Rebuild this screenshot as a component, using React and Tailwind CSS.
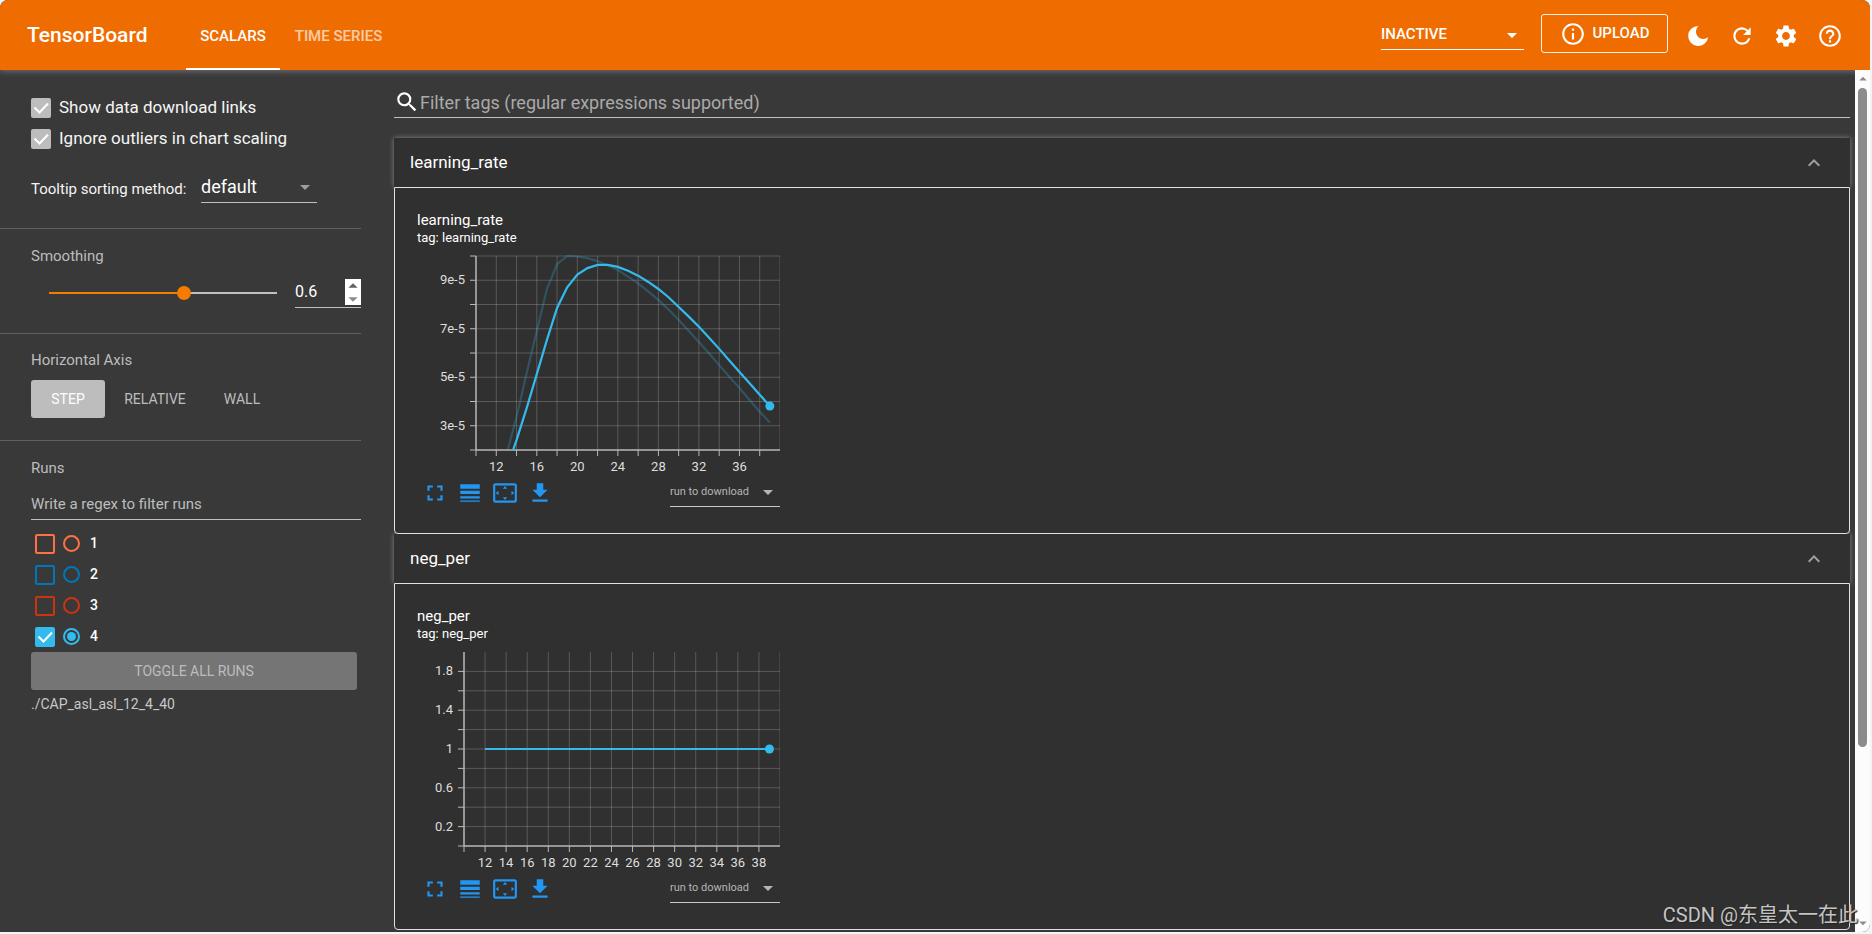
import { useState } from 'react'
import {
  MdArrowDropDown,
  MdArrowDropUp,
  MdExpandLess,
  MdFileDownload,
  MdFullscreen,
  MdHelpOutline,
  MdInfoOutline,
  MdLineWeight,
  MdRefresh,
  MdSearch,
  MdSettings,
  MdSettingsOverscan,
} from 'react-icons/md'

const RUNS = [
  { id: '1', box: 'border-[#ff7043]', color: '#ff7043' },
  { id: '2', box: 'border-[#0077bb]', color: '#0077bb' },
  { id: '3', box: 'border-[#cc3311]', color: '#cc3311' },
  { id: '4', box: 'border-[#33bbee] bg-[#33bbee]', color: '#33bbee' },
]

// values are in units of 1e-5
const LR_RAW = [
  [13, 1.8], [14, 3.36], [15, 5.18], [16, 6.91], [17, 8.64], [18, 9.66], [19, 10], [20, 9.98],
  [21, 9.91], [22, 9.79], [23, 9.61], [24, 9.42], [25, 9.15], [26, 8.87], [27, 8.54], [28, 8.19],
  [29, 7.79], [30, 7.36], [31, 6.91], [32, 6.45], [33, 5.98], [34, 5.5], [35, 5.02], [36, 4.56],
  [37, 4.06], [38, 3.58], [39, 3.13],
]

const LR_SMOOTH = [
  [13, 1.2], [14, 2.41], [15, 3.73], [16, 5.13], [17, 6.54], [18, 7.86], [19, 8.71], [20, 9.23],
  [21, 9.5], [22, 9.63], [23, 9.63], [24, 9.55], [25, 9.39], [26, 9.19], [27, 8.93], [28, 8.64],
  [29, 8.3], [30, 7.9], [31, 7.5], [32, 7.08], [33, 6.63], [34, 6.17], [35, 5.69], [36, 5.22],
  [37, 4.75], [38, 4.28], [39, 3.81],
]

const CHARTS = [
  {
    tag: 'learning_rate',
    left: 59,
    yDomain: [2, 10],
    lastTick: 10,
    yLabels: { 3: '3e-5', 5: '5e-5', 7: '7e-5', 9: '9e-5' },
    xLabels: [12, 16, 20, 24, 28, 32, 36],
    raw: LR_RAW,
    smooth: LR_SMOOTH,
  },
  {
    tag: 'neg_per',
    left: 47,
    yDomain: [0, 10],
    lastTick: 9,
    yLabels: { 1: '0.2', 3: '0.6', 5: '1', 7: '1.4', 9: '1.8' },
    xLabels: [12, 14, 16, 18, 20, 22, 24, 26, 28, 30, 32, 34, 36, 38],
    raw: [],
    smooth: [[12, 5], [39, 5]],
  },
]

const WIDTH = 363
const TOP = 6
const BOTTOM = 200

function range(from, to, step) {
  const out = []
  for (let v = from; v <= to; v += step) out.push(v)
  return out
}

function LineChart({ tag, left, yDomain, lastTick, yLabels, xLabels, raw, smooth }) {
  const x = (v) => left + ((v - 10) / 30) * (WIDTH - left)
  const y = (v) => BOTTOM - ((v - yDomain[0]) / (yDomain[1] - yDomain[0])) * (BOTTOM - TOP)
  const line = (points) => points.map(([a, b]) => `${x(a)},${y(b)}`).join(' ')
  const xTicks = range(10, 40, 2)
  const yTicks = range(yDomain[0], lastTick, 1)
  const last = smooth[smooth.length - 1]

  return (
    <svg width="363" height="230" viewBox="0 0 363 230" className="mt-1 block" role="img" aria-label={`${tag} chart`}>
      <clipPath id={`clip-${tag}`}>
        <rect x={left} y={TOP - 1} width={WIDTH - left} height={BOTTOM - TOP + 1} />
      </clipPath>
      <g stroke="#fff" strokeOpacity="0.2">
        {xTicks.slice(1).map((v) => (
          <line key={v} x1={x(v)} x2={x(v)} y1={TOP} y2={BOTTOM} />
        ))}
        {yTicks.slice(1).map((v) => (
          <line key={v} x1={left} x2={WIDTH} y1={y(v)} y2={y(v)} />
        ))}
      </g>
      <g stroke="#b9b9b9">
        {xTicks.slice(0, -1).map((v) => (
          <line key={v} x1={x(v)} x2={x(v)} y1={BOTTOM} y2={BOTTOM + 6} />
        ))}
        {yTicks.map((v) => (
          <line key={v} x1={left - 6} x2={left} y1={y(v)} y2={y(v)} />
        ))}
        <line x1={left} x2={left} y1={TOP} y2={BOTTOM} strokeWidth="1.5" />
        <line x1={left} x2={WIDTH} y1={BOTTOM} y2={BOTTOM} strokeWidth="1.5" />
      </g>
      <g className="fill-[#dedede] font-['Roboto',sans-serif] text-[13px]">
        {yTicks.filter((v) => yLabels[v]).map((v) => (
          <text key={v} x={left - 11} y={y(v) + 4} textAnchor="end">{yLabels[v]}</text>
        ))}
        {xLabels.map((v) => (
          <text key={v} x={x(v)} y={BOTTOM + 21} textAnchor="middle">{v}</text>
        ))}
      </g>
      <g clipPath={`url(#clip-${tag})`} fill="none" stroke="#33bbee" strokeWidth="2.2">
        <polyline points={line(raw)} strokeOpacity="0.25" />
        <polyline points={line(smooth)} />
      </g>
      <circle cx={x(last[0])} cy={y(last[1])} r="4.5" fill="#33bbee" />
    </svg>
  )
}

function ChartPanel({ chart }) {
  return (
    <section>
      <h2 className="shadow-[0_0_5px_rgba(255,255,255,0.4)]">
        <button type="button" aria-expanded="true" className="flex h-[49px] w-full items-center justify-between bg-[#303030] pl-4 pr-6 text-[17px] text-white">
          {chart.tag}
          <MdExpandLess className="size-6 text-[#a0a0a0]" />
        </button>
      </h2>
      <div className="relative rounded-b-sm border border-[#e0e0e0] bg-[#303030] px-[22px] pb-[26px] pt-[23px]">
        <div className="w-[363px]">
          <h3 className="text-[15px] leading-[18px] text-white">{chart.tag}</h3>
          <p className="text-[13px] leading-[17px] text-white">tag: {chart.tag}</p>
          <LineChart {...chart} />
          <div className="flex h-[27px] items-center justify-between">
            <div className="mb-[2px] ml-[5px] flex gap-[9px] text-[#2196f3]">
              <button type="button" aria-label="Full screen"><MdFullscreen className="size-[26px]" /></button>
              <button type="button" aria-label="Toggle log scale"><MdLineWeight className="size-[26px]" /></button>
              <button type="button" aria-label="Fit domain to data"><MdSettingsOverscan className="size-[26px]" /></button>
              <button type="button" aria-label="Download"><MdFileDownload className="size-[26px]" /></button>
            </div>
            <Dropdown
              label="Run to download"
              options={['run to download']}
              className="h-[27px] w-[110px] border-[#c8c8c8] text-[11px] text-[#b5b5b5] [&>select]:pb-1 [&>svg]:mb-1"
            />
          </div>
        </div>
      </div>
    </section>
  )
}

function Dropdown({ label, options, className, id }) {
  return (
    <div className={`grid items-center border-b ${className}`}>
      <select id={id} aria-label={label} className="h-full w-full appearance-none outline-none [grid-area:1/1]">
        {options.map((option) => (
          <option key={option}>{option}</option>
        ))}
      </select>
      <MdArrowDropDown className="pointer-events-none size-6 justify-self-end [grid-area:1/1]" />
    </div>
  )
}

function Tick() {
  return (
    <svg viewBox="0 0 20 20" className="pointer-events-none size-5 [grid-area:1/1]" fill="none" stroke="#fff" strokeWidth="2">
      <path d="M3.5 9.5l5 5L17 5.5" />
    </svg>
  )
}

function OptionBox({ children }) {
  return (
    <label className="flex h-5 items-center gap-2 text-[17px] text-[#f5f5f5]">
      <span className="grid">
        <input type="checkbox" defaultChecked className="size-5 appearance-none rounded-xs bg-[#bdbdbd] [grid-area:1/1]" />
        <Tick />
      </span>
      {children}
    </label>
  )
}

function Sidebar() {
  const [smoothing, setSmoothing] = useState(0.6)
  const fill = `linear-gradient(to right, #f57c00 ${smoothing * 100}%, #c0c0c0 ${smoothing * 100}%)`
  const nudge = (delta) => setSmoothing((v) => Math.min(1, Math.max(0, Math.round((v + delta) * 10) / 10)))

  return (
    <aside className="w-[361px] shrink-0">
      <div className="border-b border-[#616161] pb-[25px] pl-[31px] pt-7">
        <div className="flex flex-col gap-[11px]">
          <OptionBox>Show data download links</OptionBox>
          <OptionBox>Ignore outliers in chart scaling</OptionBox>
        </div>
        <div className="mt-[22px] flex h-8 items-center gap-[10px]">
          <label htmlFor="tooltip-sort" className="w-[160px] pt-1 text-[15px] text-[#f5f5f5]">Tooltip sorting method:</label>
          <Dropdown
            id="tooltip-sort"
            options={['default']}
            className="h-8 w-[116px] border-[#c0c0c0] text-[18px] text-white [&>svg]:text-[#9e9e9e]"
          />
        </div>
      </div>

      <div className="border-b border-[#616161] pb-[25px] pl-[31px] pt-[17px]">
        <label htmlFor="smoothing" className="block text-[15px] leading-5 text-[#bdbdbd]">Smoothing</label>
        <div className="mt-[13px] flex h-[29px] items-center pl-[18px]">
          <input
            id="smoothing"
            type="range"
            min="0"
            max="1"
            step="0.1"
            value={smoothing}
            onChange={(e) => setSmoothing(Number(e.target.value))}
            style={{ backgroundImage: fill }}
            className="mb-[2px] h-[2px] w-[228px] appearance-none [&::-webkit-slider-thumb]:size-[14px] [&::-webkit-slider-thumb]:appearance-none [&::-webkit-slider-thumb]:rounded-full [&::-webkit-slider-thumb]:bg-[#f57c00]"
          />
          <div className="ml-[18px] flex h-[29px] flex-1 border-b border-[#c0c0c0]">
            <input
              type="text"
              aria-label="Smoothing value"
              value={smoothing}
              onChange={(e) => setSmoothing(Number(e.target.value) || 0)}
              className="w-0 flex-1 pb-[2px] text-[16px] text-white outline-none"
            />
            <div className="flex h-[26px] w-4 flex-col justify-between overflow-hidden bg-white">
              <button type="button" aria-label="Increase" onClick={() => nudge(0.1)} className="flex h-[13px] items-center justify-center text-[#606060]">
                <MdArrowDropUp className="size-[22px] shrink-0" />
              </button>
              <button type="button" aria-label="Decrease" onClick={() => nudge(-0.1)} className="flex h-[13px] items-center justify-center text-[#8a8a8a]">
                <MdArrowDropDown className="size-[22px] shrink-0" />
              </button>
            </div>
          </div>
        </div>
      </div>

      <div className="border-b border-[#616161] pb-[22px] pl-[31px] pt-4">
        <h2 className="text-[15px] leading-5 text-[#bdbdbd]">Horizontal Axis</h2>
        <div className="mt-[10px] flex text-[14px] text-[#bdbdbd]">
          <button type="button" className="h-[38px] w-[74px] rounded-[3px] bg-[#bdbdbd] text-white">STEP</button>
          <button type="button" className="h-[38px] w-[100px]">RELATIVE</button>
          <button type="button" className="h-[38px] w-[74px]">WALL</button>
        </div>
      </div>

      <div className="pl-[31px] pt-[17px]">
        <h2 className="text-[15px] leading-5 text-[#bdbdbd]">Runs</h2>
        <input
          type="text"
          aria-label="Filter runs"
          placeholder="Write a regex to filter runs"
          className="mt-3 h-[30px] w-full border-b border-[#c0c0c0] pb-[2px] text-[15px] text-white outline-none placeholder:text-[#bdbdbd]"
        />
        <ul className="mt-2">
          {RUNS.map((run) => (
            <li key={run.id} className="flex h-[31px] items-center gap-2 pl-1">
              <span className="grid">
                <input
                  type="checkbox"
                  aria-label={`Show run ${run.id}`}
                  defaultChecked={run.id === '4'}
                  className={`size-5 appearance-none rounded-xs border-2 [grid-area:1/1] ${run.box}`}
                />
                {run.id === '4' && <Tick />}
              </span>
              <label className="flex items-center gap-[10px] text-[14px] font-medium text-white">
                <span className="grid place-items-center">
                  <input
                    type="radio"
                    name="run"
                    defaultChecked={run.id === '4'}
                    style={{ borderColor: run.color }}
                    className="size-[17px] appearance-none rounded-full border-2 [grid-area:1/1]"
                  />
                  {run.id === '4' && <span className="pointer-events-none size-[9px] rounded-full bg-[#33bbee] [grid-area:1/1]" />}
                </span>
                {run.id}
              </label>
            </li>
          ))}
        </ul>
        <button type="button" className="h-[38px] w-[326px] rounded-[3px] bg-[#757575] text-[14px] text-[#bdbdbd]">TOGGLE ALL RUNS</button>
        <p className="mt-1 text-[14px] leading-5 text-[#c8c8c8]">./CAP_asl_asl_12_4_40</p>
      </div>
    </aside>
  )
}

function Header() {
  return (
    <header className="relative z-10 flex h-[70px] shrink-0 items-center rounded-t-lg bg-[#ef6c00] pl-[27px] pr-[27px] text-white shadow-[0_1px_6px_rgba(255,255,255,0.3)]">
      <h1 className="w-[159px] pt-[2px] text-[21px] font-medium">TensorBoard</h1>
      <nav className="flex h-full text-[15px] font-medium">
        <button type="button" className="w-[94px] border-b-2 border-white pt-1">SCALARS</button>
        <button type="button" className="w-[117px] border-b-2 border-transparent pt-1 text-white/65">TIME SERIES</button>
      </nav>
      <div className="ml-auto flex items-center">
        <Dropdown
          label="Inactive dashboards"
          options={['INACTIVE']}
          className="h-[30px] w-[143px] border-white text-[15px] font-medium"
        />
        <button type="button" className="mb-[3px] ml-[17px] flex h-[39px] w-[127px] items-center justify-center gap-[7px] rounded-[3px] border border-white/90 text-[15px] font-medium">
          <MdInfoOutline className="size-[26px]" />
          UPLOAD
        </button>
        <div className="ml-[17px] mt-[2px] flex gap-[18px]">
          <button type="button" aria-label="Dark mode">
            <svg viewBox="0 0 26 26" className="size-[26px]" fill="currentColor">
              <path d="M13.5 3a10 10 0 1 0 9.6 11.2a6.6 6.6 0 0 1-9.6-11.2z" />
            </svg>
          </button>
          <button type="button" aria-label="Reload"><MdRefresh className="size-[26px]" /></button>
          <button type="button" aria-label="Settings"><MdSettings className="size-[26px]" /></button>
          <button type="button" aria-label="Help"><MdHelpOutline className="size-[26px]" /></button>
        </div>
      </div>
    </header>
  )
}

export default function App() {
  return (
    <div className="h-screen bg-[#f3f3f3] pb-[2px] pr-[2px] font-['Roboto','Noto_Sans_CJK_SC',sans-serif]">
      <div className="flex h-full flex-col overflow-hidden rounded-t-lg rounded-br-lg bg-[#393939]">
        <Header />
        <div className="flex min-h-0 flex-1">
          <Sidebar />
          <main className="ml-[33px] mr-[5px] min-w-0 flex-1">
            <label className="mt-[17px] flex h-[31px] items-center border-b border-[#c0c0c0] text-white">
              <MdSearch className="size-[26px] shrink-0" />
              <input
                type="text"
                aria-label="Filter tags"
                placeholder="Filter tags (regular expressions supported)"
                className="min-w-0 flex-1 text-[18px] outline-none placeholder:text-[#aaaaaa]"
              />
            </label>
            <div className="mt-5">
              {CHARTS.map((chart) => (
                <ChartPanel key={chart.tag} chart={chart} />
              ))}
            </div>
          </main>
          <div className="flex w-[15px] shrink-0 flex-col items-center bg-[#fcfcfc] text-[#8b8b8b]">
            <MdArrowDropUp className="size-[18px] shrink-0" />
            <div className="h-[659px] w-[9px] rounded-full bg-[#8b8b8b]" />
            <MdArrowDropDown className="mt-auto size-[18px] shrink-0" />
          </div>
        </div>
      </div>
      <p className="pointer-events-none absolute bottom-[5px] right-[14px] z-20 text-[20px] leading-7 text-[#c4c4c4] [text-shadow:1px_1px_1px_#222]">
        CSDN @东皇太一在此
      </p>
    </div>
  )
}
